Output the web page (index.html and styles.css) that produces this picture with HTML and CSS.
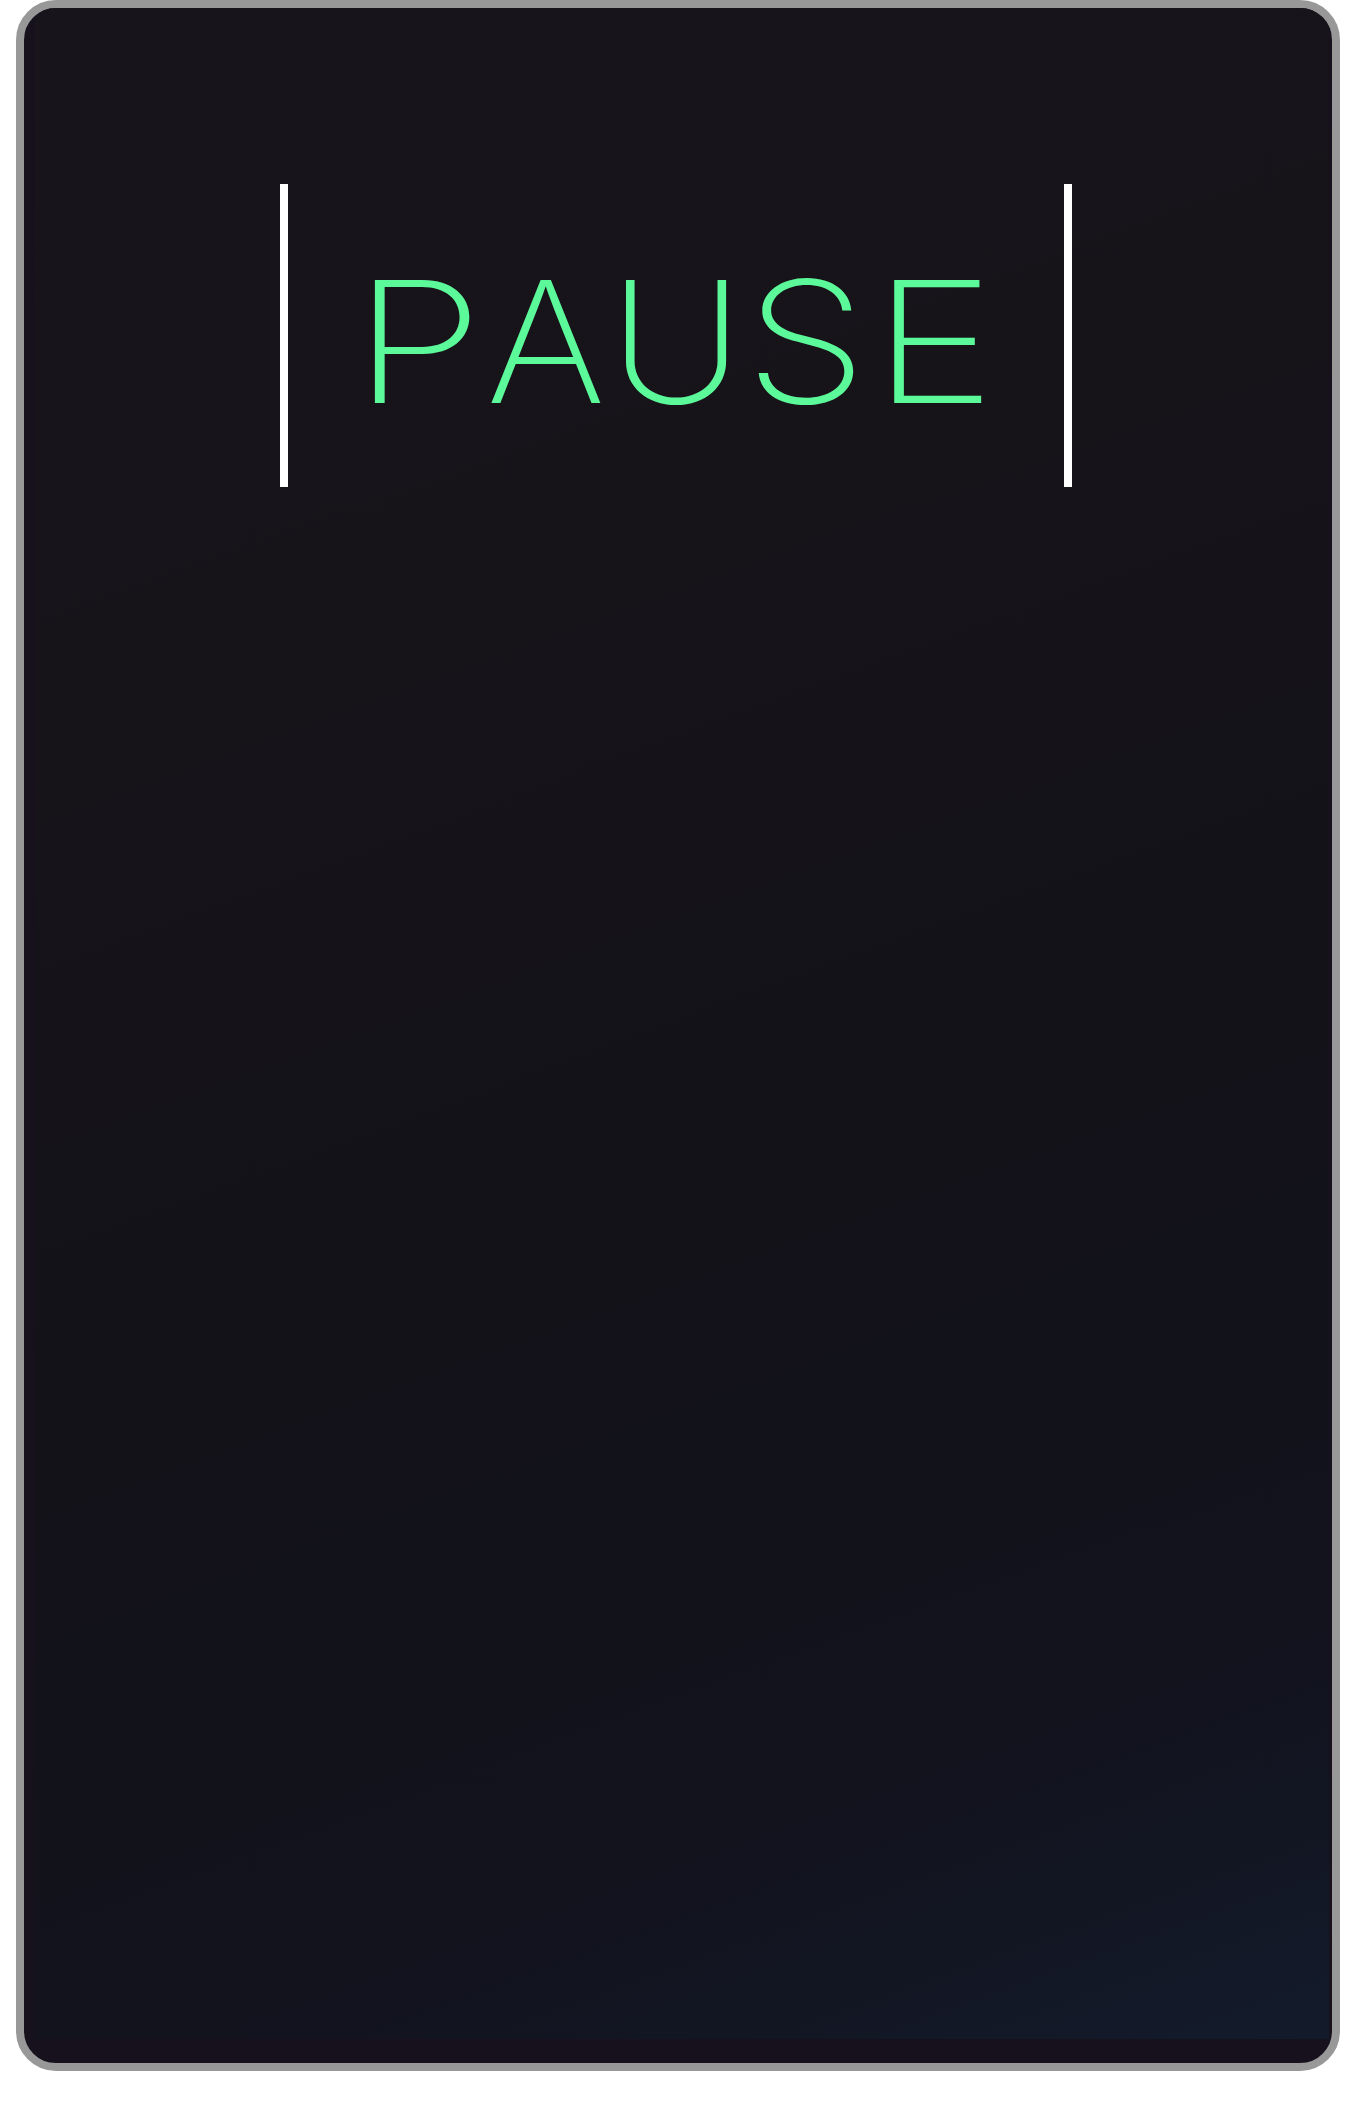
FILE: index.html
```html
<!DOCTYPE html>
<html lang="en">
<head>
<meta charset="utf-8">
<title>Pause</title>
<link rel="stylesheet" href="styles.css">
</head>
<body>
<div class="card">
  <div class="screen">
    <div class="header">
      <span class="bar"></span>
      <h1 class="title"><span class="ch ch-p">P</span><span class="ch ch-a">A</span><span class="ch ch-u">U</span><span class="ch ch-s">S</span><span class="ch ch-e">E</span></h1>
      <span class="bar"></span>
    </div>
  </div>
</div>
</body>
</html>
```
FILE: styles.css
```css
html, body {
  margin: 0;
  padding: 0;
  background: #ffffff;
}
.card {
  margin: 0 16px;
  height: 2071px;
  box-sizing: border-box;
  border: 8px solid #989898;
  border-radius: 40px;
  background: #17111d;
  overflow: hidden;
  display: flex;
  flex-direction: column;
}
.screen {
  flex: 1;
  margin: 0 3px 24px 11px;
  background: linear-gradient(160deg, #17141b 0%, #161419 30%, #131219 60%, #12131e 85%, #131b2b 100%);
}
.header {
  display: flex;
  justify-content: center;
  align-items: center;
  margin-top: 176px;
  margin-left: -12px;
}
.bar {
  width: 8px;
  height: 303px;
  background: #ffffff;
  flex: none;
}
.title {
  margin: 0;
  width: 776px;
  display: flex;
  justify-content: center;
  font-family: "Inter", "Liberation Sans", sans-serif;
  font-weight: 200;
  font-size: 169px;
  color: #5cf99a;
  line-height: 1;
  position: relative;
  top: 6px;
}
.ch {
  display: block;
  width: 130px;
  text-align: center;
  transform-origin: center;
}
.ch-p { transform: translateX(2px) scaleX(1.25); }
.ch-a { transform: scaleX(1.08); }
.ch-u { transform: scaleX(1.1); }
.ch-s { transform: scaleX(1.16); }
.ch-e { transform: translateX(-2px) scaleX(1.24); }
```
